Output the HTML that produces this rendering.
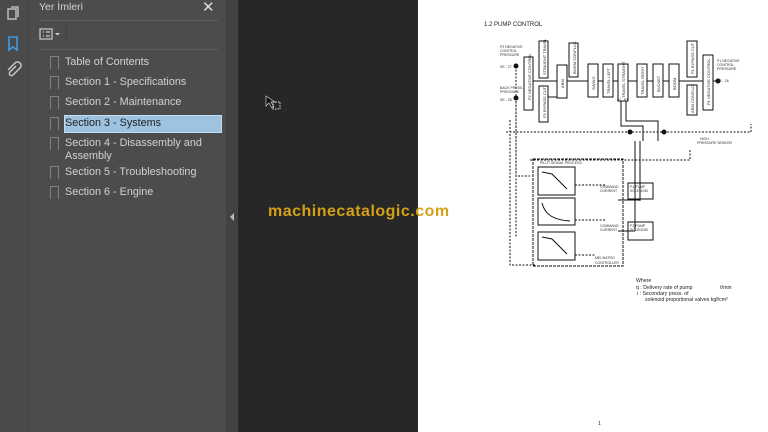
<!DOCTYPE html>
<html><head><meta charset="utf-8"><style>
body{margin:0;width:768px;height:432px;overflow:hidden;background:#272727;font-family:"Liberation Sans",sans-serif;position:relative}
.abs{position:absolute}
.lb{left:0;top:0;width:28px;height:432px;background:#4a4a4a;border-right:1px solid #444}
.panel{left:29px;top:0;width:197px;height:432px;background:#4c4c4c}
.strip{left:226px;top:0;width:12px;height:432px;background:#424242}
.page{left:418px;top:0;width:350px;height:432px;background:#fff}
.it{position:absolute;left:65px;color:#d2d2d2;font-size:10.8px;line-height:13px}
.bm{position:absolute;left:50px;width:7px;height:12px;border:1px solid #808080;border-bottom:none}
.wm{left:268px;top:203px;color:#d4a017;font-weight:bold;font-size:16px;letter-spacing:0.5px}
</style></head><body>
<div class="abs lb"></div>
<div class="abs panel"></div>
<div class="abs strip"></div>
<div class="abs page"></div>
<svg class="abs" style="left:0;top:0" width="28" height="90">
<rect x="8" y="9" width="8" height="10" fill="none" stroke="#ccc" stroke-width="1.3"/>
<path d="M11 7h7v10" fill="none" stroke="#ccc" stroke-width="1.3"/>
<path d="M9 37h8v13l-4-3-4 3z" fill="none" stroke="#3d9be9" stroke-width="1.6"/>
<path d="M16 66l-6 6a2 2 0 0 0 3 3l7-7a3.5 3.5 0 0 0-5-5l-7 7" fill="none" stroke="#ccc" stroke-width="1.4"/>
</svg>
<div class="abs" style="left:39px;top:1px;color:#d2d2d2;font-size:10.5px">Yer İmleri</div>
<div class="abs" style="left:202px;top:-2px;color:#ddd;font-size:15px">✕</div>
<div class="abs" style="left:39px;top:20px;width:179px;height:1px;background:#5e5e5e"></div>
<svg class="abs" style="left:38px;top:27px" width="30" height="16">
<rect x="2" y="2" width="12" height="10" fill="none" stroke="#ccc" stroke-width="1.2"/>
<path d="M5 5h1M8 5h4M5 9h1M8 9h4" stroke="#ccc" stroke-width="1.2"/>
<path d="M17 6l2.5 2.5L22 6z" fill="#ccc"/>
</svg>
<div class="abs" style="left:66px;top:24px;width:1px;height:19px;background:#444"></div>
<div class="abs" style="left:39px;top:49px;width:179px;height:1px;background:#5e5e5e"></div>
<div class="abs" style="left:64px;top:115px;width:158px;height:18px;background:#9dc3e0;border:1px solid #c5dcee;box-sizing:border-box"></div>
<div class="bm" style="top:56px"></div><div class="it" style="top:56px">Table of Contents</div>
<div class="bm" style="top:76px"></div><div class="it" style="top:76px">Section 1 - Specifications</div>
<div class="bm" style="top:96px"></div><div class="it" style="top:96px">Section 2 - Maintenance</div>
<div class="bm" style="top:117px"></div><div class="it" style="top:117px;color:#222">Section 3 - Systems</div>
<div class="bm" style="top:137px"></div><div class="it" style="top:137px">Section 4 - Disassembly and<br>Assembly</div>
<div class="bm" style="top:166px"></div><div class="it" style="top:166px">Section 5 - Troubleshooting</div>
<div class="bm" style="top:186px"></div><div class="it" style="top:186px">Section 6 - Engine</div>
<svg class="abs" style="left:228px;top:212px" width="8" height="10"><path d="M6 1v8L2 5z" fill="#bbb"/></svg>
<svg class="abs" style="left:264px;top:94px" width="20" height="20"><path d="M2 2v10l3-3 3 5 2-1-3-5h4z" fill="#111" stroke="#ccc" stroke-width=".7"/><rect x="9" y="8" width="7" height="7" fill="none" stroke="#ddd" stroke-dasharray="1.5 1"/></svg>
<div class="abs wm">machinecatalogic.com</div>
<svg class="abs" style="left:0;top:0" width="768" height="432" font-family="Liberation Sans" fill="none" stroke="#111" stroke-width="1">
<text x="484" y="26" font-size="6" fill="#222" stroke="none">1.2  PUMP CONTROL</text>
<g>
<rect x="524" y="57" width="9" height="53"/><rect x="539" y="86" width="9" height="36"/><rect x="539" y="41" width="9" height="37"/>
<rect x="557" y="65" width="10" height="33"/><rect x="569" y="43" width="9" height="34"/>
<rect x="588" y="64" width="10" height="33"/><rect x="603" y="64" width="10" height="33"/><rect x="618" y="64" width="10" height="37"/>
<rect x="637" y="64" width="10" height="33"/><rect x="653" y="64" width="10" height="33"/><rect x="669" y="64" width="10" height="33"/>
<rect x="687" y="41" width="10" height="36"/><rect x="687" y="85" width="10" height="30"/><rect x="703" y="55" width="10" height="55"/>
<path d="M533 81h24M548 81h9M567 81h21M598 81h5M613 81h5M628 81h9M647 81h6M663 81h6M679 81h24M713 81h5M548 97h9"/>
<path d="M621 101v25h22v15M626 101v20h32v20M635 141v90M640 141v60"/>
<path d="M635 231h-17M640 200h-22"/>
<circle cx="516" cy="66" r="2" fill="#111"/><circle cx="516" cy="98" r="2" fill="#111"/><circle cx="718" cy="81" r="2" fill="#111"/>
<circle cx="630" cy="132" r="2" fill="#111"/><circle cx="664" cy="132" r="2" fill="#111"/>
</g>
<g font-size="4" fill="#222" stroke="none">
<text transform="translate(531,100) rotate(-90)">P2 NEGATIVE CONTROL</text>
<text transform="translate(546,118) rotate(-90)">P2 BYPASS CUT</text>
<text transform="translate(546,75) rotate(-90)">STRAIGHT TRAVEL</text>
<text transform="translate(564,88) rotate(-90)">ARM</text>
<text transform="translate(576,74) rotate(-90)">BOOM CONFLUX</text>
<text transform="translate(595,90) rotate(-90)">SWING</text>
<text transform="translate(610,94) rotate(-90)">TRAVEL LEFT</text>
<text transform="translate(625,98) rotate(-90)">TRAVEL STRAIGHT</text>
<text transform="translate(644,95) rotate(-90)">TRAVEL RIGHT</text>
<text transform="translate(660,92) rotate(-90)">BUCKET</text>
<text transform="translate(676,90) rotate(-90)">BOOM</text>
<text transform="translate(694,74) rotate(-90)">P1 BYPASS CUT</text>
<text transform="translate(694,113) rotate(-90)">ARM CONFLUX</text>
<text transform="translate(710,105) rotate(-90)">P1 NEGATIVE CONTROL</text>
</g>
<g stroke-dasharray="2 1.5">
<path d="M516 66v110h14M516 98v140M506 132h245v-8M510 120v145h25M530 160h160v-10"/>
<path d="M575 185h30M575 220h30M575 255h20"/>
</g>
<rect x="533" y="159" width="90" height="107" stroke-dasharray="3 1"/>
<rect x="538" y="167" width="37" height="28"/><rect x="538" y="198" width="37" height="27"/><rect x="538" y="232" width="37" height="28"/>
<path d="M542 172l10 2 15 15M542 203c3 12 12 17 28 18M542 237l10 2 15 15"/>
<rect x="628" y="183" width="25" height="16"/><rect x="628" y="222" width="25" height="18"/>
<g font-size="3.5" fill="#333" stroke="none">
<text x="500" y="48">P2 NEGATIVE</text><text x="500" y="52">CONTROL</text><text x="500" y="56">PRESSURE</text><text x="500" y="68">SE - 27</text>
<text x="500" y="89">BACK PRESS.</text><text x="500" y="93">PRESSURE</text><text x="500" y="101">SE - 28</text>
<text x="717" y="62">P1 NEGATIVE</text><text x="717" y="66">CONTROL</text><text x="717" y="70">PRESSURE</text><text x="717" y="82">SE - 26</text>
<text x="700" y="140">HIGH</text><text x="697" y="144">PRESSURE SENSOR</text>
<text x="600" y="188">COMMAND</text><text x="600" y="192">CURRENT</text><text x="600" y="227">COMMAND</text><text x="600" y="231">CURRENT</text>
<text x="595" y="259">MECHATRO</text><text x="595" y="264">CONTROLLER</text>
<text x="540" y="164">PILOT SIGNAL PROCESS</text>
<text x="630" y="188">P1 PUMP</text><text x="630" y="192">SOLENOID</text><text x="630" y="227">P2 PUMP</text><text x="630" y="231">SOLENOID</text>
<text x="617" y="101">P2</text><text x="624" y="101">P1</text>
</g>
<g font-size="5.2" fill="#222" stroke="none">
<text x="636" y="282">Where</text>
<text x="636" y="289">q : Delivery rate of pump</text><text x="720" y="289">ℓ/min</text>
<text x="637" y="295">i : Secondary press. of</text>
<text x="645" y="301">solenoid proportional valves  kgf/cm²</text>
<text x="598" y="425">1</text>
</g>
</svg>
</body></html>
